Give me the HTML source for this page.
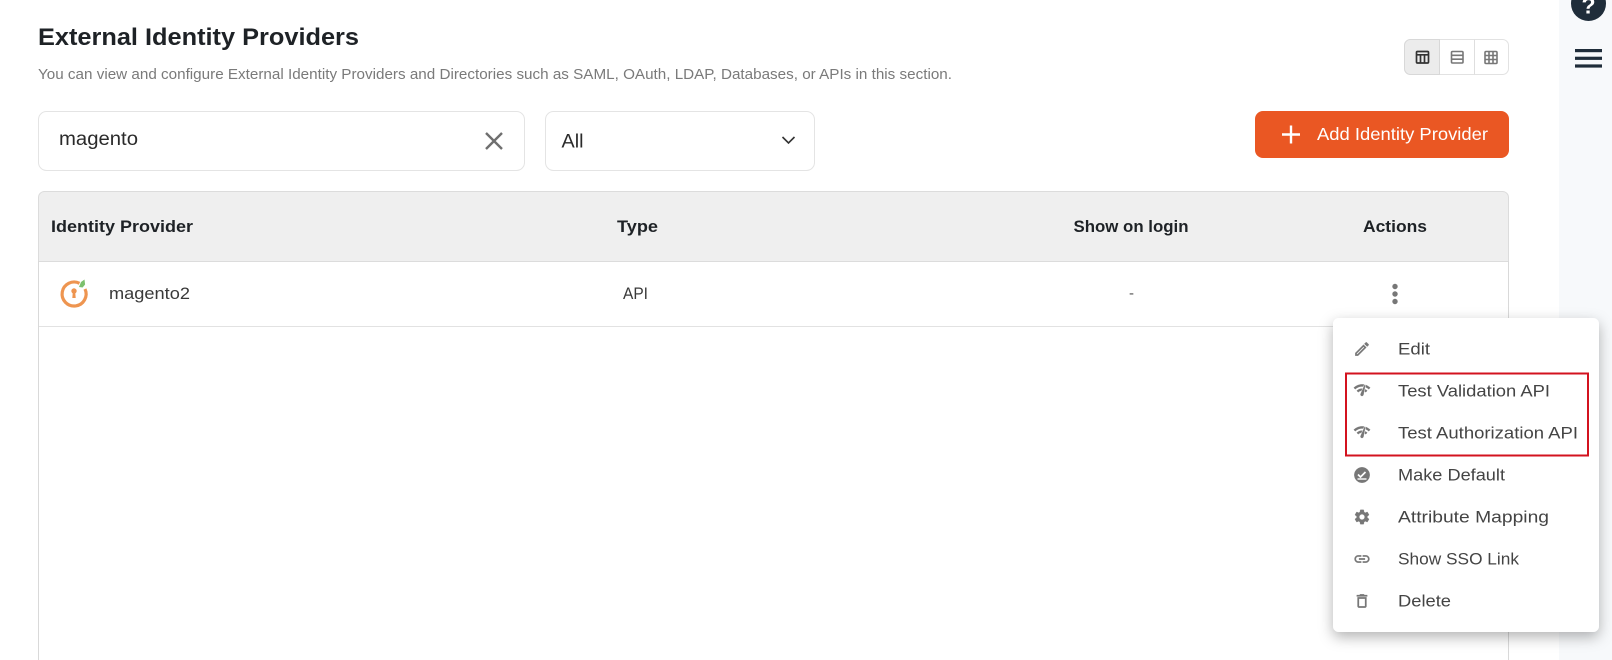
<!DOCTYPE html>
<html lang="en">
<head>
<meta charset="utf-8">
<title>External Identity Providers</title>
<style>
html,body{margin:0;padding:0;background:#fff;width:1612px;height:660px;overflow:hidden}
svg{display:block}
text{font-family:"Liberation Sans",sans-serif}
.h{font-weight:700;font-size:16.5px;fill:#1e2226}
.m{font-size:17px;fill:#444}
.i{fill:#777;stroke:#777;stroke-width:.35}
</style>
</head>
<body>
<svg width="1612" height="660" viewBox="0 0 1612 660" xmlns="http://www.w3.org/2000/svg">
<defs>
<filter id="sh" x="-20%" y="-20%" width="140%" height="140%"><feDropShadow dx="0" dy="5" stdDeviation="7" flood-color="#000" flood-opacity=".3"/></filter>
</defs>
<rect width="1612" height="660" fill="#fff"/>
<rect x="1559" y="0" width="53" height="660" fill="#f7f9fb"/>

<!-- help + hamburger -->
<circle cx="1588.5" cy="3.5" r="17.5" fill="#1f2d3a"/>
<text x="1588.5" y="13.5" text-anchor="middle" font-size="23" font-weight="700" fill="#fff">?</text>
<rect x="1575" y="49" width="27" height="3.2" fill="#1f2d3a"/>
<rect x="1575" y="56.7" width="27" height="3.2" fill="#1f2d3a"/>
<rect x="1575" y="64.4" width="27" height="3.200" fill="#1f2d3a"/>

<!-- heading -->
<text x="38" y="45" font-size="24" font-weight="700" fill="#1e2226" textLength="321" lengthAdjust="spacingAndGlyphs">External Identity Providers</text>
<text x="38" y="79" font-size="14.5" fill="#7a7a7a" textLength="914" lengthAdjust="spacingAndGlyphs">You can view and configure External Identity Providers and Directories such as SAML, OAuth, LDAP, Databases, or APIs in this section.</text>

<!-- view toggle -->
<rect x="1404.5" y="39.5" width="104" height="35" rx="6" fill="#fff" stroke="#e2e2e2"/>
<path d="M1439.5 39.5H1410.5a6 6 0 0 0-6 6v23a6 6 0 0 0 6 6h29z" fill="#ececec" stroke="#d8d8d8"/>
<line x1="1474.5" y1="39.5" x2="1474.5" y2="74.5" stroke="#dedede"/>
<g fill="none" stroke="#333" stroke-width="1.7">
<rect x="1416.5" y="51.5" width="12" height="11.5" rx="1"/>
<path d="M1416.5 54.8h12M1420.5 54.8V63M1424.5 54.8V63"/>
</g>
<g fill="none" stroke="#777" stroke-width="1.6">
<rect x="1451.5" y="51.5" width="11.500" height="11.500" rx="1"/>
<path d="M1451.5 55.3h11.500M1451.5 59.2h11.500"/>
<rect x="1485" y="51.500" width="12" height="12" rx="1"/>
<path d="M1489 51.500v12M1493 51.500v12M1485 55.500h12M1485 59.500h12"/>
</g>

<!-- search -->
<rect x="38.500" y="111.500" width="486" height="59" rx="8" fill="#fff" stroke="#e4e4e4"/>
<text x="59" y="145" font-size="19" fill="#2a2a2a" textLength="79" lengthAdjust="spacingAndGlyphs">magento</text>
<path d="M486 133l16 16M502 133l-16 16" stroke="#6f6f6f" stroke-width="2.400" fill="none"/>

<!-- select -->
<rect x="545.500" y="111.500" width="269" height="59" rx="8" fill="#fff" stroke="#e4e4e4"/>
<text x="561.500" y="147.500" font-size="19" fill="#2a2a2a" textLength="22" lengthAdjust="spacingAndGlyphs">All</text>
<path d="M782.500 137l6 6 6-6" stroke="#333" stroke-width="1.600" fill="none"/>

<!-- add button -->
<rect x="1255" y="111" width="254" height="47" rx="8" fill="#ea5723"/>
<path d="M1282 134.500h18M1291 125.500v18" stroke="#fff" stroke-width="2.400" fill="none"/>
<text x="1317" y="140" font-size="17.500" fill="#fff" textLength="171" lengthAdjust="spacingAndGlyphs">Add Identity Provider</text>

<!-- table -->
<path d="M38.500 261.500V197.500a6 6 0 0 1 6-6H1502.500a6 6 0 0 1 6 6V261.500z" fill="#efefef" stroke="#dcdcdc"/>
<line x1="38" y1="326.500" x2="1509" y2="326.500" stroke="#e2e2e2"/>
<path d="M38.500 261V660M1508.500 261V660" stroke="#d9d9d9" fill="none"/>

<text class="h" x="51" y="232" textLength="142" lengthAdjust="spacingAndGlyphs">Identity Provider</text>
<text class="h" x="617" y="232" textLength="41" lengthAdjust="spacingAndGlyphs">Type</text>
<text class="h" x="1073.500" y="232" textLength="115" lengthAdjust="spacingAndGlyphs">Show on login</text>
<text class="h" x="1363" y="232" textLength="64" lengthAdjust="spacingAndGlyphs">Actions</text>

<!-- logo -->
<path d="M79.500 283.300A12 12 0 1 0 85 289" fill="none" stroke="#ee9550" stroke-width="3.200"/>
<circle cx="74" cy="291" r="2.700" fill="#ee9550"/>
<path d="M72.800 292h2.400l.5 6h-3.400z" fill="#ee9550"/>
<path d="M79 287l2-5 3.500-2.500.6 5-2.500 3z" fill="#7cc06d"/>

<text x="109" y="299" font-size="17" fill="#3a3a3a" textLength="81" lengthAdjust="spacingAndGlyphs">magento2</text>
<text x="623" y="299" font-size="17" fill="#3a3a3a" textLength="25" lengthAdjust="spacingAndGlyphs">API</text>
<text x="1129" y="298" font-size="15" fill="#555">-</text>
<circle cx="1395" cy="286.500" r="2.700" fill="#777"/>
<circle cx="1395" cy="294" r="2.700" fill="#777"/>
<circle cx="1395" cy="301.500" r="2.700" fill="#777"/>

<!-- popup -->
<rect x="1333" y="318" width="266" height="314" rx="6" fill="#fff" filter="url(#sh)"/>

<rect x="1346" y="373.500" width="242" height="82" fill="none" stroke="#d3131f" stroke-width="2"/>

<text class="m" x="1398" y="354.500" textLength="32" lengthAdjust="spacingAndGlyphs">Edit</text>
<text class="m" x="1398" y="396.500" textLength="152" lengthAdjust="spacingAndGlyphs">Test Validation API</text>
<text class="m" x="1398" y="438.500" textLength="180" lengthAdjust="spacingAndGlyphs">Test Authorization API</text>
<text class="m" x="1398" y="480.500" textLength="107" lengthAdjust="spacingAndGlyphs">Make Default</text>
<text class="m" x="1398" y="522.500" textLength="151" lengthAdjust="spacingAndGlyphs">Attribute Mapping</text>
<text class="m" x="1398" y="564.500" textLength="121" lengthAdjust="spacingAndGlyphs">Show SSO Link</text>
<text class="m" x="1398" y="606.500" textLength="53" lengthAdjust="spacingAndGlyphs">Delete</text>

<!-- menu icons -->
<g class="i">
<g transform="translate(1353 340) scale(.75)"><path d="M14.060 9.020l.92.92L5.920 19H5v-.92l9.060-9.060M17.660 3c-.25 0-.51.1-.7.29l-1.830 1.830 3.750 3.750 1.830-1.830c.39-.39.39-1.020 0-1.410l-2.340-2.340c-.2-.2-.45-.29-.71-.29zm-3.600 3.190L3 17.250V21h3.750L17.810 9.940l-3.750-3.750z"/></g>
<g transform="translate(1353 381) scale(.75)"><path d="M15.900 5c-.17 0-.32.09-.41.23l-.07.15-5.180 11.650c-.16.29-.26.61-.26.96 0 1.110.9 2.010 2.010 2.010.96 0 1.770-.68 1.960-1.590l.01-.03L16.400 5.500c0-.28-.22-.5-.5-.5zM1 9l2 2c2.880-2.880 6.790-4.080 10.530-3.620l1.190-2.680C9.890 3.840 4.740 5.270 1 9zm20 2l2-2c-1.640-1.640-3.550-2.820-5.590-3.570l-.53 2.820c1.500.62 2.900 1.530 4.120 2.750zm-4 4l2-2c-.8-.8-1.700-1.420-2.660-1.890l-.55 2.920c.42.27.83.59 1.210.97zM5 13l2 2c1.130-1.130 2.560-1.790 4.030-2l1.280-2.880c-2.630-.08-5.300.87-7.310 2.880z"/></g>
<g transform="translate(1353 423) scale(.75)"><path d="M15.900 5c-.17 0-.32.09-.41.23l-.07.15-5.180 11.650c-.16.29-.26.61-.26.96 0 1.110.9 2.010 2.010 2.010.96 0 1.770-.68 1.960-1.590l.01-.03L16.400 5.500c0-.28-.22-.5-.5-.5zM1 9l2 2c2.880-2.880 6.790-4.080 10.530-3.620l1.190-2.680C9.890 3.840 4.740 5.270 1 9zm20 2l2-2c-1.640-1.640-3.550-2.820-5.590-3.570l-.53 2.820c1.500.62 2.900 1.530 4.120 2.750zm-4 4l2-2c-.8-.8-1.700-1.420-2.660-1.890l-.55 2.920c.42.27.83.59 1.210.97zM5 13l2 2c1.130-1.130 2.560-1.790 4.030-2l1.280-2.880c-2.630-.08-5.300.87-7.310 2.880z"/></g>
<circle cx="1362" cy="475" r="7.700"/>
<g transform="translate(1353 508) scale(.75)"><path d="M19.140 12.940c.04-.3.06-.61.06-.94 0-.32-.02-.64-.07-.94l2.030-1.580c.18-.14.23-.41.12-.61l-1.920-3.320c-.12-.22-.37-.29-.59-.22l-2.390.96c-.5-.38-1.030-.7-1.620-.94l-.36-2.540c-.04-.24-.24-.41-.48-.41h-3.840c-.24 0-.43.17-.47.41l-.36 2.540c-.59.24-1.130.57-1.620.94l-2.390-.96c-.22-.08-.47 0-.59.22L2.740 8.870c-.12.21-.08.47.12.61l2.030 1.580c-.05.3-.09.63-.09.94s.02.64.07.94l-2.030 1.580c-.18.14-.23.41-.12.61l1.920 3.320c.12.22.37.29.59.22l2.390-.96c.5.38 1.030.7 1.620.94l.36 2.540c.05.24.24.41.48.41h3.840c.24 0 .44-.17.47-.41l.36-2.540c.59-.24 1.130-.56 1.620-.94l2.390.96c.22.08.47 0 .59-.22l1.920-3.320c.12-.22.07-.47-.12-.61l-2.010-1.580zM12 15.600c-1.980 0-3.600-1.620-3.600-3.600s1.620-3.600 3.600-3.600 3.600 1.620 3.600 3.600-1.620 3.600-3.600 3.600z"/></g>
<g transform="translate(1353 550) scale(.75)"><path d="M3.900 12c0-1.710 1.390-3.100 3.100-3.100h4V7H7c-2.760 0-5 2.240-5 5s2.240 5 5 5h4v-1.900H7c-1.710 0-3.100-1.390-3.100-3.100zM8 13h8v-2H8v2zm9-6h-4v1.900h4c1.710 0 3.100 1.390 3.100 3.100s-1.390 3.100-3.100 3.100h-4V17h4c2.760 0 5-2.240 5-5s-2.240-5-5-5z"/></g>
<g transform="translate(1353 592) scale(.75)"><path d="M6 19c0 1.100.9 2 2 2h8c1.100 0 2-.9 2-2V7H6v12zM8 9h8v10H8V9zm7.500-5l-1-1h-5l-1 1H5v2h14V4z"/></g>
</g>
<path d="M1358 474.500l2.500 2.500 5-5" fill="none" stroke="#fff" stroke-width="1.700"/>
<path d="M1357.500 479h9" fill="none" stroke="#fff" stroke-width="1.400"/>
</svg>
</body>
</html>
